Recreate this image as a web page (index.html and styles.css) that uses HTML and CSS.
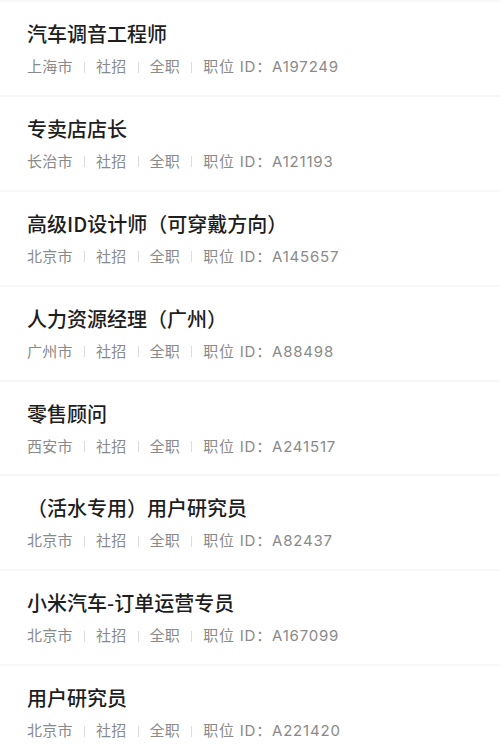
FILE: index.html
```html
<!doctype html>
<html lang="zh-CN">
<head>
<meta charset="UTF-8">
<title>职位列表</title>
<link rel="stylesheet" href="styles.css">
</head>
<body>
<ul class="jobs">
  <li class="job">
    <h3 class="job-title">汽车调音工程师</h3>
    <p class="job-meta"><span>上海市</span><i></i><span>社招</span><i></i><span>全职</span><i></i><span class="job-id">职位 ID：A197249</span></p>
  </li>
  <li class="job">
    <h3 class="job-title">专卖店店长</h3>
    <p class="job-meta"><span>长治市</span><i></i><span>社招</span><i></i><span>全职</span><i></i><span class="job-id">职位 ID：A121193</span></p>
  </li>
  <li class="job">
    <h3 class="job-title">高级ID设计师（可穿戴方向）</h3>
    <p class="job-meta"><span>北京市</span><i></i><span>社招</span><i></i><span>全职</span><i></i><span class="job-id">职位 ID：A145657</span></p>
  </li>
  <li class="job">
    <h3 class="job-title">人力资源经理（广州）</h3>
    <p class="job-meta"><span>广州市</span><i></i><span>社招</span><i></i><span>全职</span><i></i><span class="job-id">职位 ID：A88498</span></p>
  </li>
  <li class="job">
    <h3 class="job-title">零售顾问</h3>
    <p class="job-meta"><span>西安市</span><i></i><span>社招</span><i></i><span>全职</span><i></i><span class="job-id">职位 ID：A241517</span></p>
  </li>
  <li class="job">
    <h3 class="job-title">（活水专用）用户研究员</h3>
    <p class="job-meta"><span>北京市</span><i></i><span>社招</span><i></i><span>全职</span><i></i><span class="job-id">职位 ID：A82437</span></p>
  </li>
  <li class="job">
    <h3 class="job-title">小米汽车-订单运营专员</h3>
    <p class="job-meta"><span>北京市</span><i></i><span>社招</span><i></i><span>全职</span><i></i><span class="job-id">职位 ID：A167099</span></p>
  </li>
  <li class="job">
    <h3 class="job-title">用户研究员</h3>
    <p class="job-meta"><span>北京市</span><i></i><span>社招</span><i></i><span>全职</span><i></i><span class="job-id">职位 ID：A221420</span></p>
  </li>
</ul>
</body>
</html>
```
FILE: styles.css
```css
body,ul,li,h3,p{ margin:0; padding:0;}
ul,li{list-style:none;}
body{background:#fff; font-family:"Noto Sans CJK SC","Noto Sans",sans-serif; overflow:hidden;}

.jobs{border-top:2px solid #f7f7f7;}
.job{height:94.9px; box-sizing:border-box; padding:18px 27px 0; border-bottom:2px solid #f7f7f7;}
.job-title{font-size:20px; line-height:28px; font-weight:500; color:#1e1e1e;}
.job-meta{display:flex; align-items:center; margin-top:9px; font-family:Inter,"Noto Sans CJK SC",sans-serif; font-size:15px; line-height:20px; color:#8a8a8a; letter-spacing:0.3px;}
.job-meta i{display:block; width:1px; height:11px; background:#dcdcdc; margin:0 11px;}
.job-meta .job-id{letter-spacing:0.8px;}
```
